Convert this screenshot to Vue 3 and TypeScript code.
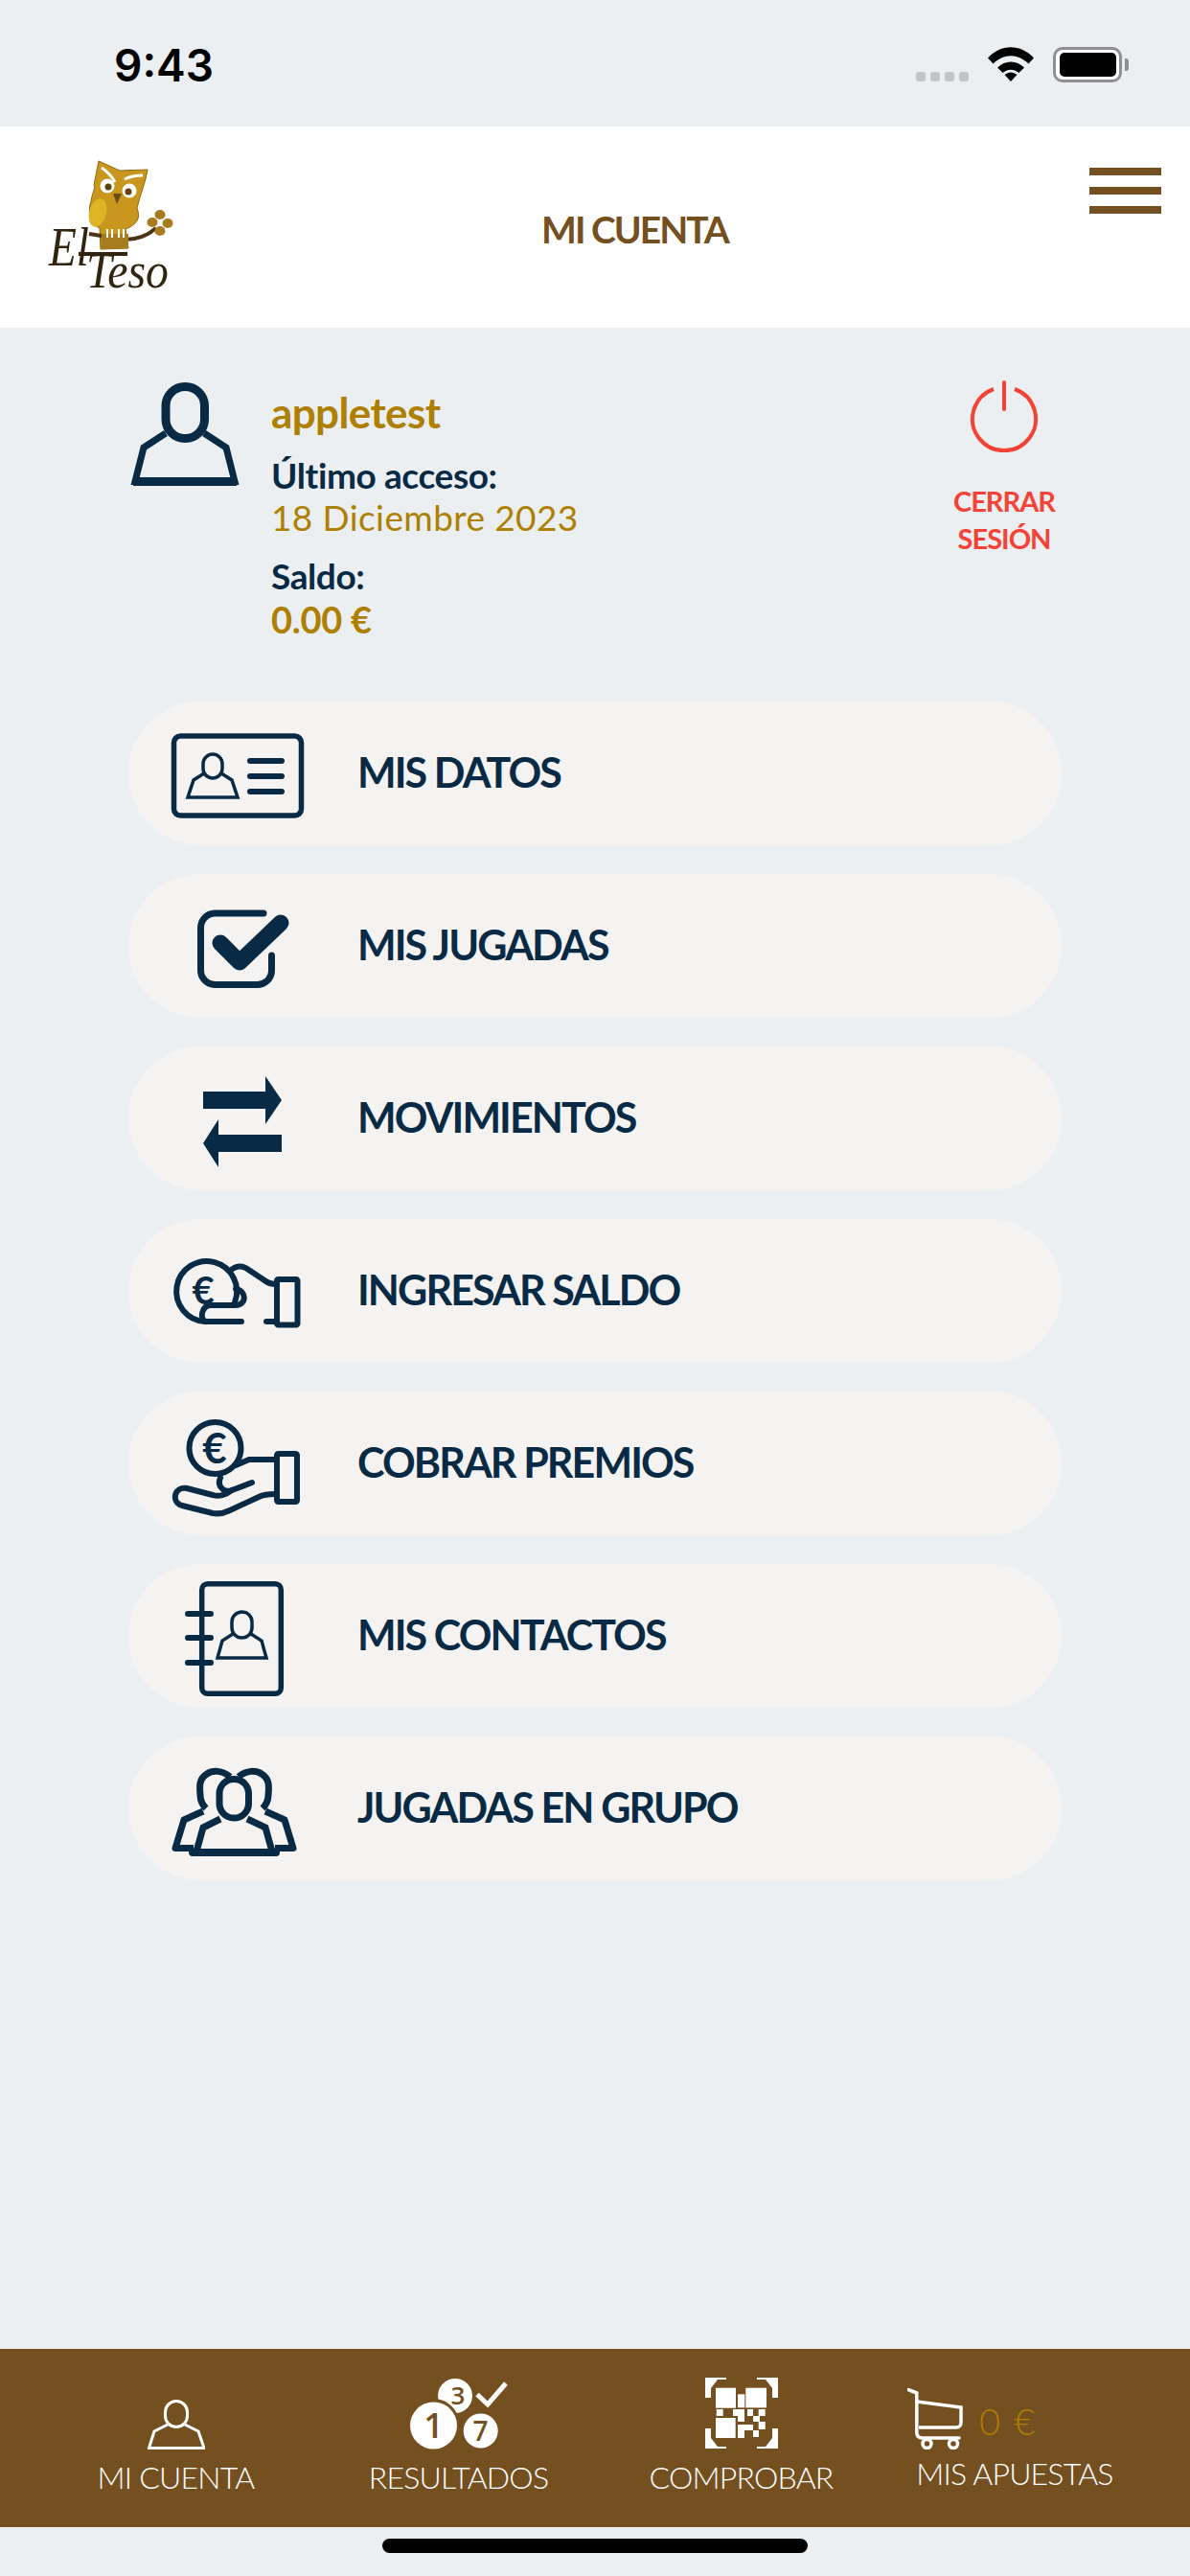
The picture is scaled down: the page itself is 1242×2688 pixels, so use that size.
<template>
  <div class="screen">
    <div class="status-bar">
      <span class="clock">9:43</span>
      <div class="status-icons">
        <div class="signal">
          <i v-for="n in 4" :key="n" />
        </div>
        <svg class="wifi" width="48" height="36" viewBox="0 0 48 36">
          <path d="M0 11.5C14-3.500 34-3.500 48 11.500L42.500 17.500C31 6.500 17 6.500 5.500 17.500Z" />
          <path d="M10 21.500C18 13.500 30 13.500 38 21.500L32.500 27C27 22.500 21 22.500 15.500 27Z" />
          <path d="M17.500 29C21.500 25.500 26.500 25.500 30.500 29L24 36Z" />
        </svg>
        <div class="battery"><div class="battery-fill" /></div>
        <div class="battery-cap" />
      </div>
    </div>

    <header class="top-bar">
      <svg class="logo" width="150" height="160" viewBox="0 0 150 160">
        <path d="M63 8 85 18 114 17C112 30 106 44 103 57 107 68 103 74 91 79L94 99 65 100 64 78C54 74 51 62 55 50 56 42 60 36 58 33Z" fill="#c9961e" stroke="#8c6a16" stroke-width="1" />
        <ellipse cx="62" cy="62" rx="9" ry="15" fill="#dcb424" transform="rotate(15 62 62)" />
        <path d="M66 15C72 19 76 23 80 30M90 27C96 24 102 23 109 23" stroke="#fff" stroke-width="3" fill="none" />
        <circle cx="72" cy="34" r="7.500" fill="#fff" />
        <circle cx="95" cy="39" r="7.500" fill="#fff" />
        <circle cx="73" cy="35" r="3.500" fill="#5f4413" />
        <circle cx="94" cy="40" r="3.500" fill="#5f4413" />
        <path d="M78 42H87L82 53Z" fill="#6b4c14" />
        <path d="M53 84 90 90C102 90 114 86 123 78" stroke="#4a3516" stroke-width="4" fill="none" />
        <path d="M66 84 94 84 94 99 65 100Z" fill="#a67c1e" />
        <path d="M72 79V88M77 79V88M84 79V88M89 79V88" stroke="#fff" stroke-width="2" />
        <ellipse cx="127" cy="64" rx="5.500" ry="5" fill="#a67c1e" />
        <ellipse cx="119" cy="72" rx="5.500" ry="5" fill="#a67c1e" />
        <ellipse cx="135" cy="73" rx="5.500" ry="5" fill="#a67c1e" />
        <ellipse cx="127" cy="81" rx="5.500" ry="5" fill="#a67c1e" />
        <path d="M42 105H93" stroke="#33240f" stroke-width="4" />
        <text class="logo-text" x="11" y="117" font-size="58" textLength="42" lengthAdjust="spacingAndGlyphs">El</text>
        <text class="logo-text" x="50" y="140" font-size="52" textLength="86" lengthAdjust="spacingAndGlyphs">Teso</text>
      </svg>
      <h1 class="title">MI CUENTA</h1>
      <div class="burger"><i /><i /><i /></div>
    </header>

    <section class="profile">
      <svg class="profile-icon" width="120" height="112" viewBox="0 0 120 112">
        <rect x="40" y="6.500" width="40.500" height="54" rx="20" class="ink-line" stroke-width="9" />
        <path d="M40 55 17 70 8 105.500H112L103 70 80 55" class="ink-line" stroke-width="7" />
        <path d="M6 105.500H114" class="ink-line" stroke-width="9" />
      </svg>
      <div class="profile-info">
        <div class="user-name">appletest</div>
        <div class="info-label">Último acceso:</div>
        <div class="info-date">18 Diciembre 2023</div>
        <div class="info-label saldo">Saldo:</div>
        <div class="info-money">0.00 €</div>
      </div>
      <div class="logout">
        <svg width="72" height="76" viewBox="0 0 72 76">
          <path d="M25 9A33 33 0 1 0 47 9" fill="none" stroke="#f44336" stroke-width="4" />
          <path d="M36 2V30" stroke="#f44336" stroke-width="4" stroke-linecap="round" />
        </svg>
        <span>CERRAR<br />SESIÓN</span>
      </div>
    </section>

    <nav class="menu">
      <a class="row">
        <svg class="row-icon" viewBox="0 -15 140 150">
          <rect x="3.500" y="21" width="133" height="83" rx="7" class="ink-line" stroke-width="5.500" />
          <rect x="34" y="40" width="20" height="25" rx="10" class="ink-line" stroke-width="3.500" />
          <path d="M35 60 24 67 18 85H70L64 67 53 60" class="ink-line" stroke-width="3.500" />
          <path d="M83 47H116M83 63H116M83 79H116" class="ink-line" stroke-width="6" stroke-linecap="round" />
        </svg>
        <span>MIS DATOS</span>
      </a>
      <a class="row">
        <svg class="row-icon" viewBox="0 -15 140 150">
          <path d="M97 26H46A15 15 0 0 0 31.500 41V86A15 15 0 0 0 46 100.500H90A15 15 0 0 0 105.500 86V70" class="ink-line" stroke-width="7" stroke-linecap="round" />
          <path d="M52 57 72 77 115 36" class="ink-line" stroke-width="17" stroke-linecap="round" stroke-linejoin="round" />
        </svg>
        <span>MIS JUGADAS</span>
      </a>
      <a class="row">
        <svg class="row-icon" viewBox="0 -15 140 150">
          <path d="M34 32H99V16L116 41 99 66V50H34Z" class="ink-fill" />
          <path d="M116 77H50V61L34 86 50 111V95H116Z" class="ink-fill" />
        </svg>
        <span>MOVIMIENTOS</span>
      </a>
      <a class="row">
        <svg class="row-icon" viewBox="0 -15 140 150">
          <path d="M67 72A31.500 31.500 0 1 0 36 92H74" class="ink-line" stroke-width="6" stroke-linecap="round" />
          <path d="M36 92C30 88 33 75 42 75H66C80 76 80 60 68 58" class="ink-line" stroke-width="6" stroke-linecap="round" />
          <path d="M62 39C68 34 74 33 80 37L98 49C102 52 106 53 110 53" class="ink-line" stroke-width="6" stroke-linecap="round" />
          <rect x="111" y="48" width="21.500" height="47.500" rx="1.500" class="ink-line" stroke-width="6" />
          <path d="M100 92H111" class="ink-line" stroke-width="6" stroke-linecap="round" />
          <text class="euro" x="34" y="74" font-size="40" text-anchor="middle">€</text>
        </svg>
        <span>INGRESAR SALDO</span>
      </a>
      <a class="row">
        <svg class="row-icon" viewBox="0 -15 140 150">
          <circle cx="46.500" cy="44" r="27" class="ink-line" stroke-width="6" />
          <text class="euro" x="46" y="60" font-size="44" text-anchor="middle">€</text>
          <path d="M85 80 64 88C56 91 48 84 52 75" class="ink-line" stroke-width="6" stroke-linecap="round" />
          <path d="M64 88C58 93 50 95 44 93L17 86C4 84 0 100 12 104L44 112C50 113 56 112 62 109L92 95C98 92 104 92 110 92" class="ink-line" stroke-width="6" stroke-linecap="round" />
          <path d="M68 62 82 56H110" class="ink-line" stroke-width="6" stroke-linecap="round" />
          <rect x="111" y="50" width="21" height="50" rx="1.500" class="ink-line" stroke-width="6" />
        </svg>
        <span>COBRAR PREMIOS</span>
      </a>
      <a class="row">
        <svg class="row-icon" viewBox="0 -15 140 150">
          <rect x="32.700" y="5.700" width="82.600" height="114.600" rx="6" class="ink-line" stroke-width="5.500" />
          <path d="M18 37H42M18 62H42M18 88H42" class="ink-line" stroke-width="6" stroke-linecap="round" />
          <rect x="64" y="35" width="21" height="27" rx="10.500" class="ink-line" stroke-width="3.500" />
          <path d="M65 58 54 65 49 83H100L95 65 84 58" class="ink-line" stroke-width="3.500" />
        </svg>
        <span>MIS CONTACTOS</span>
      </a>
      <a class="row">
        <svg class="row-icon" viewBox="0 -15 140 150">
          <path d="M62 27C54 20 44 20 38 24 30 29 30 36 31 46 31 52 33 56 37 60" class="ink-line" stroke-width="7" />
          <path d="M71 27C79 20 89 20 95 24 103 29 103 36 102 46 102 52 100 56 96 60" class="ink-line" stroke-width="7" />
          <rect x="51" y="29.500" width="30.500" height="40.500" rx="15" class="ink-line" stroke-width="7" />
          <path d="M34 63 14 72 5 101.500H24" class="ink-line" stroke-width="7" stroke-linejoin="round" />
          <path d="M99 63 119 72 128 101.500H109" class="ink-line" stroke-width="7" stroke-linejoin="round" />
          <path d="M52 71 34 80 27 105M80 71 99 80 106 105" class="ink-line" stroke-width="7" />
          <path d="M23 106H110" class="ink-line" stroke-width="8" stroke-linecap="round" />
        </svg>
        <span>JUGADAS EN GRUPO</span>
      </a>
    </nav>

    <footer class="tab-bar">
      <a class="tab">
        <div class="tab-icon">
          <svg width="60" height="52" viewBox="0 0 60 52">
            <rect x="18.500" y="1.500" width="23" height="27" rx="11.500" class="white-line" stroke-width="3" />
            <path d="M21 26 7 33 1.500 50.500H59L53 33 39 26" class="white-line" stroke-width="3" />
          </svg>
        </div>
        <span>MI CUENTA</span>
      </a>
      <a class="tab">
        <div class="tab-icon">
          <svg width="102" height="74" viewBox="0 0 102 74">
            <circle cx="47" cy="18" r="18" fill="#fff" />
            <circle cx="24.500" cy="48" r="27" fill="#744f20" />
            <circle cx="24.500" cy="49" r="24.500" fill="#fff" />
            <circle cx="73.700" cy="54.500" r="18" fill="#fff" />
            <path d="M70 16.500 81 27 100 5" fill="none" stroke="#fff" stroke-width="5" />
            <text class="digit" x="24.500" y="62" font-size="36" text-anchor="middle">1</text>
            <text class="digit" x="50" y="27" font-size="26" text-anchor="middle">3</text>
            <text class="digit" x="73.500" y="64.500" font-size="28" text-anchor="middle">7</text>
          </svg>
        </div>
        <span>RESULTADOS</span>
      </a>
      <a class="tab">
        <div class="tab-icon">
          <svg width="76" height="76" viewBox="0 0 76 76" fill="#fff">
            <path d="M0 1H22V3H13L6 12V22H0Z" />
            <path d="M76 1H54V3H63L70 12V22H76Z" />
            <path d="M0 75H22V73H13L6 64V54H0Z" />
            <path d="M76 75H54V73H63L70 64V54H76Z" />
            <rect x="11" y="11.700" width="21" height="21" />
            <rect x="42.300" y="11.700" width="21.700" height="20.700" />
            <rect x="11" y="43" width="20.700" height="21" />
            <rect x="34" y="18.300" width="7.300" height="14" />
            <rect x="11.700" y="34" width="7" height="7" />
            <path d="M29 34H41V47H34V41H29Z" />
            <rect x="44" y="34" width="6" height="7" />
            <rect x="55.700" y="34" width="7" height="7" />
            <rect x="50" y="41" width="7" height="6" />
            <rect x="55.700" y="47" width="7" height="8" />
            <path d="M34 50H50V56H41V64H34Z" />
            <rect x="50" y="56" width="6" height="7" />
          </svg>
        </div>
        <span>COMPROBAR</span>
      </a>
      <a class="tab tab-cart">
        <div class="tab-icon cart-icon">
          <svg width="58" height="64" viewBox="0 0 58 64">
            <path d="M1 1.500 9.800 5V46C9.800 50 12 52 16 52H54" class="white-line" stroke-width="3.500" stroke-linecap="round" />
            <path d="M9.800 14 56 20V36C56 39 54 41 51 41H12" class="white-line" stroke-width="3.500" />
            <circle cx="20.500" cy="58" r="4.500" class="white-line" stroke-width="3.500" />
            <circle cx="48" cy="58" r="4.500" class="white-line" stroke-width="3.500" />
          </svg>
          <span class="cart-total">0 €</span>
        </div>
        <span>MIS APUESTAS</span>
      </a>
    </footer>

    <div class="home-area"><div class="home-indicator" /></div>
  </div>
</template>

<script setup lang="ts">
// static screen, nothing to wire up
</script>

<style>
body {
  margin: 0;
}
</style>

<style scoped>
.screen {
  width: 1242px;
  height: 2688px;
  display: flex;
  flex-direction: column;
  overflow: hidden;
  background: #ebeff2;
  font-family: Lato, "Noto Sans", sans-serif;
}

.status-bar {
  height: 132px;
  flex: none;
  display: flex;
  justify-content: space-between;
  box-sizing: border-box;
  padding: 49px 64px 0 119px;
}

.clock {
  font-family: Inter, sans-serif;
  font-size: 46px;
  font-weight: 600;
  line-height: 38px;
  color: #000;
}

.status-icons {
  display: flex;
  height: 37px;
}

.signal {
  display: flex;
  gap: 5px;
  align-self: flex-end;
  margin-bottom: 1px;
}

.signal i {
  width: 10px;
  height: 10px;
  border-radius: 3px;
  background: #c4c4c4;
}

.wifi {
  margin-left: 20px;
}

.battery {
  width: 72px;
  height: 37px;
  margin-left: 20px;
  box-sizing: border-box;
  border: 3px solid #8e8e93;
  border-radius: 10px;
  padding: 3px 3px 3px 4px;
  background: #fff;
}

.battery-fill {
  height: 100%;
  border-radius: 5px;
  background: #000;
}

.battery-cap {
  width: 4px;
  height: 13px;
  align-self: center;
  margin-left: 3px;
  border-radius: 0 3px 3px 0;
  background: #8e8e93;
}

.top-bar {
  height: 210px;
  flex: none;
  display: flex;
  justify-content: space-between;
  align-items: flex-start;
  box-sizing: border-box;
  padding: 28px 30px 0 40px;
  background: #fff;
}

.logo-text {
  font-family: "Liberation Serif", serif;
  font-style: italic;
  fill: #33240f;
}

.title {
  margin: 57px 0 0 -2px;
  font-size: 39px;
  line-height: 44px;
  font-weight: 700;
  letter-spacing: -2px;
  color: #744f20;
}

.burger {
  display: flex;
  flex-direction: column;
  gap: 12px;
  margin-top: 15px;
}

.burger i {
  display: block;
  width: 75px;
  height: 8px;
  background: #744f20;
}

.profile {
  height: 390px;
  flex: none;
  display: flex;
  align-items: flex-start;
  box-sizing: border-box;
  padding: 55px 0 0 133px;
}

.profile-icon {
  flex: none;
}

.profile-info {
  margin-left: 30px;
  width: 703px;
  padding-top: 8px;
}

.user-name {
  font-size: 44px;
  line-height: 50px;
  font-weight: 700;
  letter-spacing: -0.6px;
  color: #ae7f00;
}

.info-label {
  font-size: 37px;
  line-height: 44px;
  margin-top: 19px;
  font-weight: 700;
  letter-spacing: -0.4px;
  color: #082a45;
}

.info-date {
  font-size: 37px;
  line-height: 44px;
  margin-top: 0;
  color: #ae7f00;
  letter-spacing: 0.4px;
}

.saldo {
  margin-top: 17px;
}

.info-money {
  font-size: 38px;
  line-height: 44px;
  margin-top: 1px;
  font-weight: 700;
  letter-spacing: -0.3px;
  color: #ae7f00;
}

.logout {
  width: 120px;
  margin-left: 2px;
  display: flex;
  flex-direction: column;
  align-items: center;
  color: #f44336;
  font-size: 29px;
  line-height: 39px;
  font-weight: 700;
  letter-spacing: -1px;
  text-align: center;
}

.logout span {
  margin-top: 30px;
}

.menu {
  display: flex;
  flex-direction: column;
  gap: 30px;
  padding: 0 134px;
}

.row {
  height: 150px;
  display: flex;
  align-items: center;
  gap: 55px;
  padding-left: 44px;
  border-radius: 75px;
  background: #f4f3f1;
  color: #082a45;
  font-size: 43px;
  font-weight: 700;
  letter-spacing: -1.9px;
}

.row span {
  margin-bottom: 3px;
}

.row-icon {
  flex: none;
  width: 140px;
  height: 150px;
}

.ink-line {
  fill: none;
  stroke: #082a45;
}

.ink-fill {
  fill: #082a45;
}

.euro {
  font-weight: 700;
  letter-spacing: 0;
  fill: #082a45;
}

.tab-bar {
  height: 186px;
  flex: none;
  margin-top: auto;
  display: grid;
  grid-template-columns: repeat(3, 295px) 276px;
  box-sizing: border-box;
  padding-left: 36px;
  background: #744f20;
  color: #fff;
  font-size: 32px;
  font-weight: 300;
  letter-spacing: -0.8px;
}

.tab {
  display: flex;
  flex-direction: column;
  align-items: center;
  white-space: nowrap;
  line-height: 38px;
}

.tab-icon {
  height: 75px;
  margin-top: 30px;
  margin-bottom: 10px;
  display: flex;
  align-items: flex-end;
}

.cart-icon {
  margin-bottom: 6px;
  align-self: flex-start;
  margin-left: 26px;
}

.cart-total {
  font-size: 38px;
  line-height: 44px;
  margin: 0 0 8px 17px;
  color: #ae7f00;
  letter-spacing: 2px;
}

.white-line {
  fill: none;
  stroke: #fff;
}

.digit {
  font-family: "Open Sans", sans-serif;
  font-weight: 600;
  letter-spacing: 0;
  fill: #744f20;
}

.home-area {
  height: 51px;
  flex: none;
  display: flex;
  justify-content: center;
  padding-top: 12px;
  box-sizing: border-box;
}

.home-indicator {
  width: 444px;
  height: 15px;
  border-radius: 8px;
  background: #000;
}
</style>
